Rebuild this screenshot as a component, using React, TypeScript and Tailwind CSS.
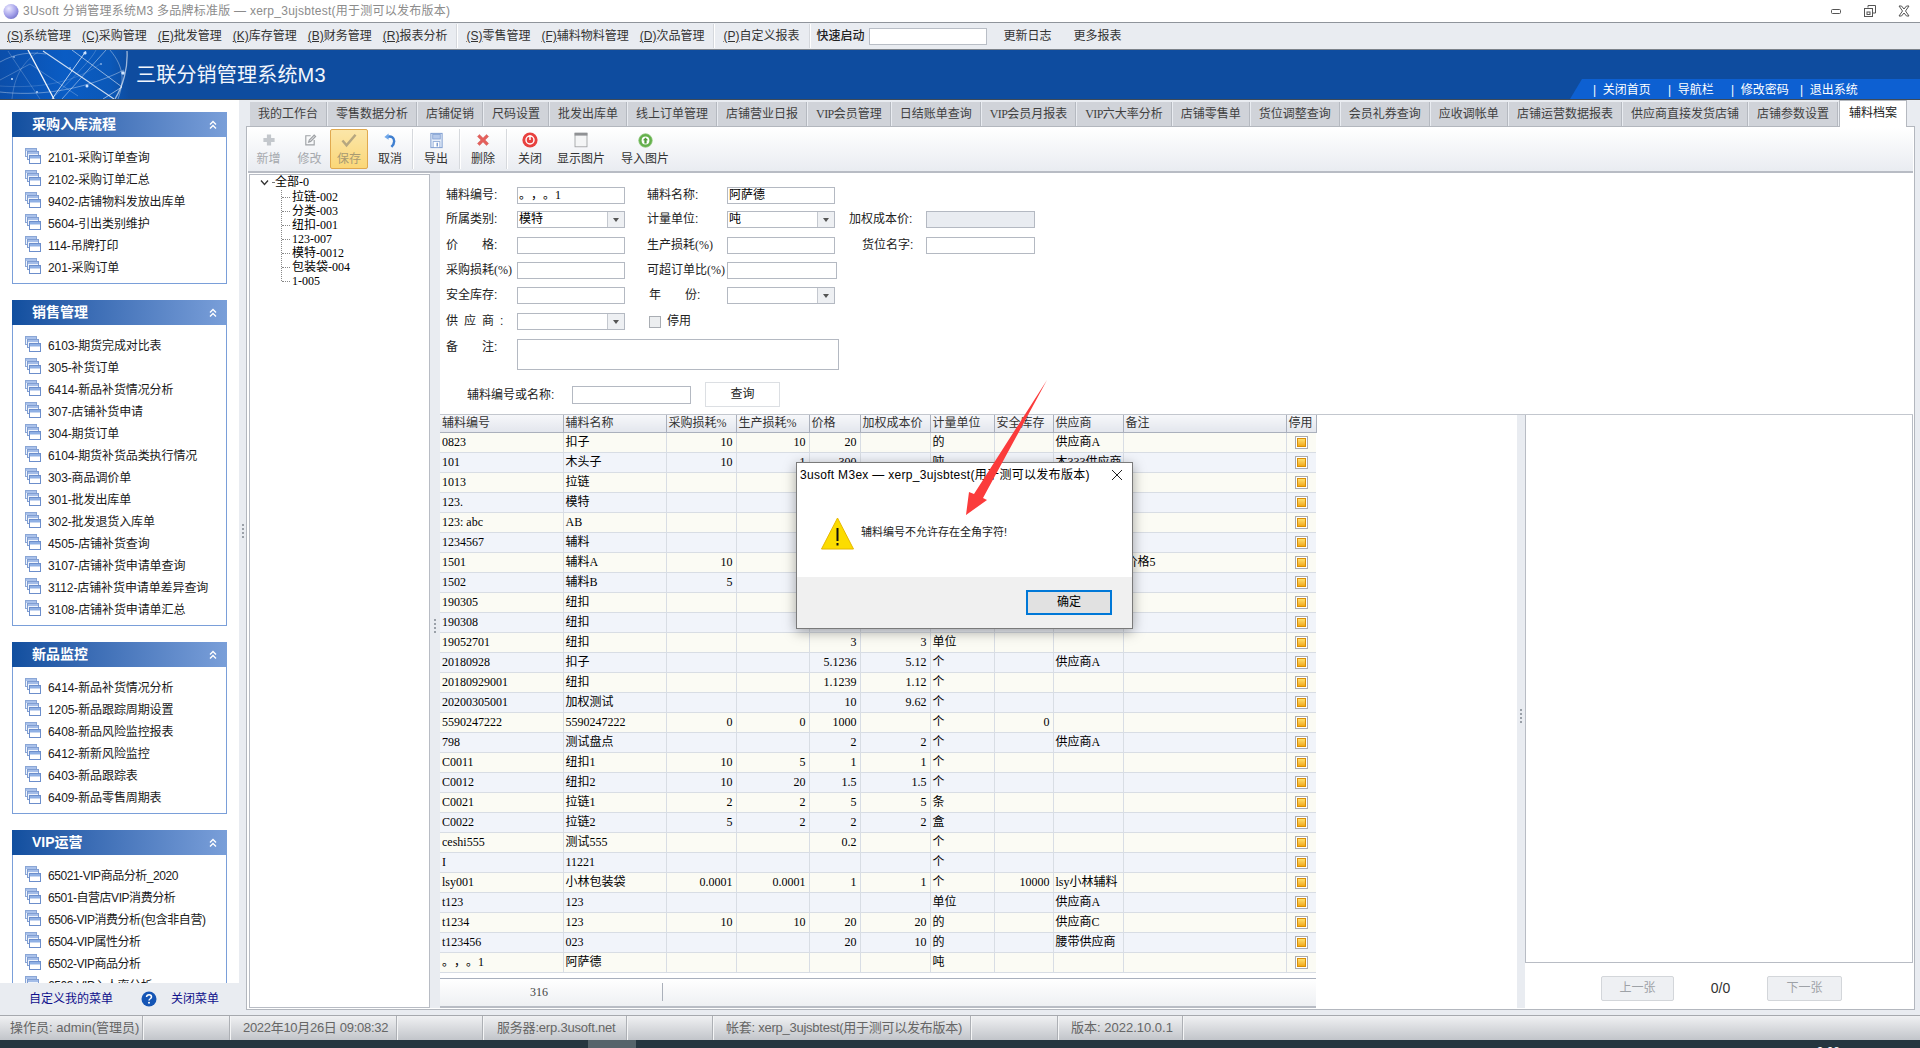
import type { ReactNode } from "react";

const MENUS_A = ["(S)|系统管理", "(C)|采购管理", "(E)|批发管理", "(K)|库存管理", "(B)|财务管理", "(R)|报表分析"];
const MENUS_B = ["(S)|零售管理", "(F)|辅料物料管理", "(D)|次品管理"];

const TABS = [
  "我的工作台", "零售数据分析", "店铺促销", "尺码设置", "批发出库单", "线上订单管理", "店铺营业日报",
  "VIP会员管理", "日结账单查询", "VIP会员月报表", "VIP六大率分析", "店铺零售单", "货位调整查询",
  "会员礼券查询", "应收调帐单", "店铺运营数据报表", "供应商直接发货店铺", "店铺参数设置",
];

const SIDE = [
  {
    title: "采购入库流程",
    items: ["2101-采购订单查询", "2102-采购订单汇总", "9402-店铺物料发放出库单", "5604-引出类别维护", "114-吊牌打印", "201-采购订单"],
  },
  {
    title: "销售管理",
    items: [
      "6103-期货完成对比表", "305-补货订单", "6414-新品补货情况分析", "307-店铺补货申请", "304-期货订单",
      "6104-期货补货品类执行情况", "303-商品调价单", "301-批发出库单", "302-批发退货入库单", "4505-店铺补货查询",
      "3107-店铺补货申请单查询", "3112-店铺补货申请单差异查询", "3108-店铺补货申请单汇总",
    ],
  },
  {
    title: "新品监控",
    items: ["6414-新品补货情况分析", "1205-新品跟踪周期设置", "6408-新品风险监控报表", "6412-新新风险监控", "6403-新品跟踪表", "6409-新品零售周期表"],
  },
  {
    title: "VIP运营",
    items: ["65021-VIP商品分析_2020", "6501-自营店VIP消费分析", "6506-VIP消费分析(包含非自营)", "6504-VIP属性分析", "6502-VIP商品分析", "6503-VIP入人率分析"],
  },
];

const TREE = ["拉链-002", "分类-003", "纽扣-001", "123-007", "模特-0012", "包装袋-004", "1-005"];

const COLS = [123, 103, 70, 73, 51, 70, 64, 59, 70, 163, 30];
const HEAD = ["辅料编号", "辅料名称", "采购损耗%", "生产损耗%", "价格", "加权成本价", "计量单位", "安全库存", "供应商", "备注", "停用"];
const RIGHT = [2, 3, 4, 5, 7];

const ROWS = [
  ["0823", "扣子", "10", "10", "20", "", "的", "", "供应商A", ""],
  ["101", "木头子", "10", "1", "300", "", "吨", "", "木333供应商", ""],
  ["1013", "拉链", "", "", "", "", "", "", "", ""],
  ["123.", "模特", "", "", "", "", "", "", "", ""],
  ["123: abc", "AB", "", "", "", "", "", "", "", ""],
  ["1234567", "辅料", "", "", "", "", "", "", "", ""],
  ["1501", "辅料A", "10", "", "", "", "", "", "", "价格5"],
  ["1502", "辅料B", "5", "", "", "", "", "", "", ""],
  ["190305", "纽扣", "", "", "", "", "", "", "", ""],
  ["190308", "纽扣", "", "", "", "", "", "", "", ""],
  ["19052701", "纽扣", "", "", "3", "3", "单位", "", "", ""],
  ["20180928", "扣子", "", "", "5.1236", "5.12", "个", "", "供应商A", ""],
  ["20180929001", "纽扣", "", "", "1.1239", "1.12", "个", "", "", ""],
  ["20200305001", "加权测试", "", "", "10", "9.62", "个", "", "", ""],
  ["5590247222", "5590247222", "0", "0", "1000", "", "个", "0", "", ""],
  ["798", "测试盘点", "", "", "2", "2", "个", "", "供应商A", ""],
  ["C0011", "纽扣1", "10", "5", "1", "1", "个", "", "", ""],
  ["C0012", "纽扣2", "10", "20", "1.5", "1.5", "个", "", "", ""],
  ["C0021", "拉链1", "2", "2", "5", "5", "条", "", "", ""],
  ["C0022", "拉链2", "5", "2", "2", "2", "盒", "", "", ""],
  ["ceshi555", "测试555", "", "", "0.2", "", "个", "", "", ""],
  ["I", "11221", "", "", "", "", "个", "", "", ""],
  ["lsy001", "小林包装袋", "0.0001", "0.0001", "1", "1", "个", "10000", "lsy小林辅料", ""],
  ["t123", "123", "", "", "", "", "单位", "", "供应商A", ""],
  ["t1234", "123", "10", "10", "20", "20", "的", "", "供应商C", ""],
  ["t123456", "023", "", "", "20", "10", "的", "", "腰带供应商", ""],
  ["。，。1", "阿萨德", "", "", "", "", "吨", "", "", ""],
];

// SimSun's half-width digits are 6px wide; Liberation Serif at 12px has the same digit width
function T({ s }: { s: string }) {
  return (
    <>
      {s.split(/([\x20-\x7e]+)/).map((p, i) =>
        i % 2 ? (
          <span key={i} className="font-['Liberation_Serif'] text-[12px]">
            {p}
          </span>
        ) : (
          p
        )
      )}
    </>
  );
}

function Dots() {
  return (
    <div className="flex flex-col gap-[2px]">
      <div className="w-[2px] h-[2px] bg-[#9aa0a8]" />
      <div className="w-[2px] h-[2px] bg-[#9aa0a8]" />
      <div className="w-[2px] h-[2px] bg-[#9aa0a8]" />
      <div className="w-[2px] h-[2px] bg-[#9aa0a8]" />
    </div>
  );
}

function MenuItem({ text }: { text: string }) {
  const [key, label] = text.split("|");
  return (
    <span className="text-[#333] whitespace-nowrap">
      <span className="underline">{key}</span>
      {label}
    </span>
  );
}

function MenuSep() {
  return <div className="w-[1px] h-[24px] bg-[#d5d8dd] shadow-[1px_0_0_#fff]" />;
}

function Network() {
  return (
    <svg width="130" height="49" viewBox="0 0 130 49" className="shrink-0" stroke="#fff" fill="none">
      <defs>
        <linearGradient id="netbg" x1="0" x2="1" y1="0" y2="0">
          <stop offset="0" stopColor="#0b4eaa" />
          <stop offset="0.5" stopColor="#0a5cc4" />
          <stop offset="0.85" stopColor="#0b58b8" />
          <stop offset="1" stopColor="#0e4c9f" />
        </linearGradient>
      </defs>
      <rect width="130" height="49" fill="url(#netbg)" stroke="none" />
      <path d="M28 0 L54 49" strokeWidth="1.3" opacity="0.95" />
      <path d="M43 1 L114 49" strokeWidth="1.1" opacity="0.8" />
      <path d="M86 1 L52 49" strokeWidth="1" opacity="0.7" />
      <path d="M72 0 L122 37 L103 49" strokeWidth="0.9" opacity="0.6" />
      <path d="M106 0 L62 49" strokeWidth="0.8" opacity="0.55" />
      <path d="M127 1 C128 18 123 36 115 49" strokeWidth="1.3" opacity="0.6" />
      <path d="M110 0 C125 18 124 32 118 49" strokeWidth="0.8" opacity="0.45" />
      <path d="M0 42 C35 46 80 42 124 20" strokeWidth="0.8" opacity="0.45" />
      <path d="M0 12 C16 3 30 2 46 4" strokeWidth="0.7" opacity="0.45" />
      <path d="M8 1 L40 49" strokeWidth="0.6" opacity="0.35" />
      <path d="M0 30 L30 14 L78 46" strokeWidth="0.6" opacity="0.4" />
      <path d="M12 49 C14 30 20 14 38 2" strokeWidth="0.6" opacity="0.35" />
      <path d="M0 36 C30 38 70 36 100 14" strokeWidth="0.5" opacity="0.3" />
      <path d="M52 49 C70 30 90 12 96 0" strokeWidth="0.6" opacity="0.35" />
      <g fill="#cfe4ff" stroke="none">
        <circle cx="85" cy="3" r="1.6" />
        <circle cx="123" cy="23" r="1.7" />
        <circle cx="87" cy="36" r="1.5" />
        <circle cx="12" cy="29" r="1" />
        <circle cx="37" cy="42" r="0.9" />
        <circle cx="14" cy="7" r="0.8" />
        <circle cx="70" cy="18" r="0.8" />
        <circle cx="101" cy="14" r="0.8" />
      </g>
    </svg>
  );
}

function WinBtn({ kind }: { kind: "min" | "max" | "close" }) {
  return (
    <svg width="14" height="14" viewBox="0 0 14 14" fill="none" stroke="#555" strokeWidth="1">
      {kind === "min" && <rect x="2.5" y="5.5" width="9" height="4" rx="1" />}
      {kind === "max" && (
        <>
          <path d="M5 3.5V1.5H12.5V9H10" />
          <rect x="1.5" y="4.5" width="8" height="8" />
          <rect x="4" y="8" width="3" height="2.5" />
        </>
      )}
      {kind === "close" && <path d="M2 2h2.5L7 5l2.5-3H12L8.5 7 12 12H9.5L7 9l-2.5 3H2l3.5-5z" />}
    </svg>
  );
}

function ListIcon() {
  return (
    <svg width="16" height="16" viewBox="0 0 16 16" className="shrink-0 -mt-[2px]">
      <rect x="0.5" y="0.5" width="11" height="8" fill="#eef3fb" stroke="#8aa6d6" />
      <rect x="1" y="1" width="10" height="2" fill="#a9c1ea" />
      <rect x="2.5" y="3.5" width="11" height="8" fill="#eef3fb" stroke="#7f9dd2" />
      <rect x="3" y="4" width="10" height="2" fill="#a4bde8" />
      <rect x="4.5" y="7.5" width="11" height="8" fill="#fff" stroke="#6c8ecb" />
      <rect x="5" y="8" width="10" height="2.5" fill="#8fb0e4" />
    </svg>
  );
}

function Panel({ title, items }: { title: string; items: string[] }) {
  return (
    <div className="mb-[16px] w-[215px]">
      <div className="h-[25px] flex items-center justify-between pl-[20px] pr-[9px] bg-gradient-to-r from-[#114f9f] to-[#7a9fd9]">
        <span className="text-[14px] font-bold text-white leading-[25px]">{title}</span>
        <svg width="10" height="10" viewBox="0 0 10 10" fill="none" stroke="#fff" strokeWidth="1.4">
          <path d="M2 4.5 5 1.5 8 4.5M2 8.5 5 5.5 8 8.5" />
        </svg>
      </div>
      <div className="border border-t-0 border-[#7a9fd9] bg-white pt-[9px] pb-[5px] pl-[12px]">
        {items.map((it) => (
          <div key={it} className="h-[22px] flex items-center gap-[7px] whitespace-nowrap text-[#1a1a1a]">
            <ListIcon />
            <span className={`mt-[1px] ${it.includes("VIP") ? "tracking-[-0.45px]" : "tracking-[-0.1px]"}`}>{it}</span>
          </div>
        ))}
      </div>
    </div>
  );
}

function ToolIcon({ name }: { name: string }) {
  if (name === "add")
    return (
      <svg width="14" height="14" viewBox="0 0 20 20">
        <path d="M7 2h6v5h5v6h-5v5H7v-5H2V7h5z" fill="#c3c7cc" />
      </svg>
    );
  if (name === "edit")
    return (
      <svg width="14" height="14" viewBox="0 0 20 20" fill="none" stroke="#9ea1a5" strokeWidth="1.6">
        <path d="M11 4H4v13h12v-7" />
        <path d="M8 13l1-3 7-7 2 2-7 7z" fill="#e6e7e9" />
      </svg>
    );
  if (name === "save")
    return (
      <svg width="18" height="17" viewBox="0 0 22 20" fill="none">
        <path d="M3 10l5 6L19 3" stroke="#b6a780" strokeWidth="3" />
      </svg>
    );
  if (name === "undo")
    return (
      <svg width="14" height="17" viewBox="0 0 20 22" fill="none">
        <path d="M6 6c6-2 10 1 10 6 0 3-2 6-4 8" stroke="#3f7fd0" strokeWidth="3.500" />
        <path d="M2 6l6-5v9z" fill="#6fa7ea" />
      </svg>
    );
  if (name === "export")
    return (
      <svg width="15" height="17" viewBox="0 0 20 22">
        <rect x="2.5" y="1.5" width="15" height="19" fill="#e8effa" stroke="#7e9dd0" strokeWidth="1.300" />
        <rect x="5" y="3" width="10" height="6" fill="#b5c9ea" stroke="#7e9dd0" />
        <rect x="5.5" y="12.5" width="9" height="8" fill="#fff" stroke="#7e9dd0" />
        <rect x="10" y="14" width="2" height="5" fill="#7e9dd0" />
      </svg>
    );
  if (name === "del")
    return (
      <svg width="14" height="14" viewBox="0 0 20 20">
        <path d="M2 5l3-3 5 5 5-5 3 3-5 5 5 5-3 3-5-5-5 5-3-3 5-5z" fill="#e4605c" stroke="#c94b48" strokeWidth="0.5" />
      </svg>
    );
  if (name === "close")
    return (
      <svg width="16" height="16" viewBox="0 0 20 20" fill="none">
        <circle cx="10" cy="10" r="9.500" fill="#e8413f" />
        <circle cx="10" cy="10" r="5" stroke="#fff" strokeWidth="1.8" />
        <path d="M10 4v6" stroke="#fff" strokeWidth="1.8" />
      </svg>
    );
  if (name === "pic")
    return (
      <svg width="16" height="16" viewBox="0 0 20 20">
        <rect x="2.5" y="1.5" width="15" height="17" fill="#f4f5f6" stroke="#9a9c9f" />
        <rect x="2" y="1" width="16" height="3.500" fill="#8f9194" />
      </svg>
    );
  return (
    <svg width="15" height="15" viewBox="0 0 20 20">
      <circle cx="10" cy="10" r="9" fill="#64b04c" stroke="#8cc878" />
      <circle cx="10" cy="10" r="5.200" fill="#fff" />
      <path d="M10 6l3.500 3.500h-2V14h-3V9.500h-2z" fill="#4f9a3a" />
    </svg>
  );
}

const TOOLS = [
  { icon: "add", label: "新增", box: "w-[41px] text-[#a6a9ad]" },
  { icon: "edit", label: "修改", box: "w-[41px] text-[#a6a9ad]" },
  {
    icon: "save",
    label: "保存",
    box: "w-[38px] text-[#a89a72] bg-gradient-to-b from-[#fbe6a8] to-[#fbd778] border border-[#e0a94f] rounded-[2px]",
  },
  { icon: "undo", label: "取消", box: "w-[40px] ml-[2px] text-[#333]" },
  { sep: true },
  { icon: "export", label: "导出", box: "w-[42px] text-[#333]" },
  { sep: true },
  { icon: "del", label: "删除", box: "w-[42px] text-[#333]" },
  { sep: true },
  { icon: "close", label: "关闭", box: "w-[42px] text-[#333]" },
  { icon: "pic", label: "显示图片", box: "w-[60px] text-[#333]" },
  { icon: "up", label: "导入图片", box: "w-[68px] text-[#333]" },
];

function Label({ children, className = "w-[71px]" }: { children: ReactNode; className?: string }) {
  return <label className={`shrink-0 whitespace-pre text-[#222] ${className}`}>{children}</label>;
}

function Input({ value = "", className = "w-[108px]" }: { value?: string; className?: string }) {
  return (
    <div className={`h-[17px] shrink-0 border border-[#b4b9c2] pl-[1px] leading-[14px] text-black whitespace-nowrap ${className}`}>
      <T s={value} />
    </div>
  );
}

function Select({ value = "" }: { value?: string }) {
  return (
    <div className="h-[17px] w-[108px] shrink-0 border border-[#b4b9c2] flex">
      <div className="flex-1 pl-[1px] leading-[14px] text-black">{value}</div>
      <div className="w-[17px] border-l border-[#c4c8cf] bg-[#eef0f3] flex items-center justify-center">
        <div className="w-0 h-0 border-x-[3.5px] border-x-transparent border-t-[4px] border-t-[#555]" />
      </div>
    </div>
  );
}

function FormRow({ children, className }: { children: ReactNode; className: string }) {
  return <div className={`flex items-center leading-[17px] pl-[6px] ${className}`}>{children}</div>;
}

function StopMark() {
  return (
    <div className="w-[13px] h-[13px] mx-auto border border-[#a9abb0] bg-white p-[1px]">
      <div className="w-full h-full border border-[#d98f08] bg-gradient-to-b from-[#fde06a] to-[#f2aa10]" />
    </div>
  );
}

function StatusCell({ children, className }: { children?: ReactNode; className: string }) {
  return (
    <div className={`h-full shrink-0 border-r border-r-[#adb0b5] shadow-[1px_0_0_#f4f5f6] flex items-center whitespace-nowrap ${className}`}>
      {children}
    </div>
  );
}

export default function App() {
  return (
    <div className="relative w-[1920px] h-[1048px] overflow-hidden flex flex-col bg-white text-[12px] [text-spacing-trim:space-all] font-['Liberation_Sans','Noto_Sans_CJK_SC',sans-serif]">
      {/* title bar */}
      <div className="h-[23px] shrink-0 flex items-center bg-white border-b border-[#8f949b] pl-[3px] pr-[9px]">
        <svg width="16" height="17" viewBox="0 0 16 17" className="shrink-0">
          <defs>
            <radialGradient id="orb" cx="0.35" cy="0.3" r="0.8">
              <stop offset="0" stopColor="#eceaff" />
              <stop offset="0.6" stopColor="#a5a2ea" />
              <stop offset="1" stopColor="#6f6fc8" />
            </radialGradient>
          </defs>
          <circle cx="8" cy="8.500" r="7.500" fill="url(#orb)" />
        </svg>
        <span className="ml-[4px] text-[12px] tracking-[0.25px] text-[#8c8c8c] whitespace-nowrap">
          3Usoft 分销管理系统M3 多品牌标准版 — xerp_3ujsbtest(用于测可以发布版本)
        </span>
        <div className="ml-auto flex items-center gap-[20px]">
          <WinBtn kind="min" />
          <WinBtn kind="max" />
          <WinBtn kind="close" />
        </div>
      </div>

      {/* menu bar */}
      <div className="h-[27px] shrink-0 flex items-center gap-[9px] pl-[7px] bg-[#e9ecf1] border-b border-[#7d838b]">
        <div className="flex gap-[11px]">
          {MENUS_A.map((m) => (
            <MenuItem key={m} text={m} />
          ))}
        </div>
        <MenuSep />
        <div className="flex gap-[11px]">
          {MENUS_B.map((m) => (
            <MenuItem key={m} text={m} />
          ))}
        </div>
        <MenuSep />
        <MenuItem text="(P)|自定义报表" />
        <MenuSep />
        <span className="-ml-[2px] text-[#222] font-medium">快速启动</span>
        <div className="-ml-[5px] w-[118px] h-[17px] bg-white border border-[#b9bec6]" />
        <span className="ml-[8px] text-[#333]">更新日志</span>
        <span className="ml-[13px] text-[#333]">更多报表</span>
      </div>

      {/* banner */}
      <div className="h-[50px] shrink-0 flex bg-[#0e4c9f] border-b border-[#3e4a58]">
        <Network />
        <div className="ml-[6px] text-[20px] tracking-[0.2px] leading-[50px] text-[#f2f6fc] whitespace-nowrap">三联分销管理系统M3</div>
        <div className="ml-auto self-end h-[20px] w-[350px] flex items-center text-white pl-[23px] pt-[1px] bg-[#0d60d2] [clip-path:polygon(12px_0,100%_0,100%_100%,0_100%)]">
          <span className="w-[75px]">|&nbsp; 关闭首页</span>
          <span className="w-[63px]">|&nbsp; 导航栏</span>
          <span className="w-[69px]">|&nbsp; 修改密码</span>
          <span>|&nbsp; 退出系统</span>
        </div>
      </div>

      {/* main */}
      <div className="flex-1 min-h-0 flex">
        <aside className="w-[239px] shrink-0 flex flex-col bg-white">
          <div className="flex-1 min-h-0 overflow-hidden pl-[12px] pt-[12px]">
            {SIDE.map((p) => (
              <Panel key={p.title} title={p.title} items={p.items} />
            ))}
          </div>
          <div className="h-[32px] shrink-0 flex items-center bg-[#e9ecf1] pl-[29px] text-[#10108c] whitespace-nowrap">
            <span>自定义我的菜单</span>
            <svg width="16" height="16" viewBox="0 0 16 16" className="ml-[28px]">
              <circle cx="8" cy="8" r="7.500" fill="#1555b5" />
              <path d="M5.500 6c.3-3 5-3 5 0 0 1.700-2.500 1.800-2.500 3.500" fill="none" stroke="#fff" strokeWidth="1.500" />
              <circle cx="8" cy="11.800" r="1" fill="#fff" />
            </svg>
            <span className="ml-[14px]">关闭菜单</span>
          </div>
        </aside>

        <div className="w-[7px] shrink-0 bg-[#e9ecf1] flex items-center justify-center pb-[54px]">
          <Dots />
        </div>

        <div className="flex-1 min-w-0 flex flex-col bg-[#e9ecf1] pr-[5px] pb-[5px]">
          {/* tabs */}
          <div className="h-[26px] shrink-0 flex items-end pl-[4px] gap-[1px] whitespace-nowrap">
            {TABS.map((t) => (
              <div key={t} className="h-[24px] px-[8px] border-r border-[#b5b9c0] bg-[#d0d3d9] text-[#3f3f3f] leading-[25px] shrink-0 [&_span]:tracking-[-0.6px]">
                <T s={t} />
              </div>
            ))}
            <div className="h-[27px] -mb-[1px] relative px-[9px] bg-white border-x border-t border-[#b5b9c0] text-[#222] leading-[24px] shrink-0">
              辅料档案
            </div>
          </div>

          {/* content box */}
          <div className="flex-1 min-h-0 flex flex-col bg-white border border-[#b3b7be] p-[1px]">
            {/* toolbar */}
            <div className="h-[45px] shrink-0 flex items-start pt-[1px] border-b-2 border-[#b8bcc4] bg-gradient-to-b from-white to-[#e9ecf1]">
              {TOOLS.map((t, i) =>
                t.sep ? (
                  <div key={i} className="w-[1px] h-[40px] mx-[2px] bg-[#d6d9dd] shadow-[1px_0_0_#fff]" />
                ) : (
                  <div key={t.label} className={`h-[40px] flex flex-col items-center whitespace-nowrap shrink-0 ${t.box}`}>
                    <div className="h-[22px] flex items-center">
                      <ToolIcon name={t.icon as string} />
                    </div>
                    <span className="leading-[17px]">{t.label}</span>
                  </div>
                )
              )}
            </div>

            <div className="flex-1 min-h-0 flex">
              {/* tree */}
              <div className="w-[181px] ml-[1px] mt-[1px] shrink-0 border border-[#b8bcc4] pl-[10px] text-black relative">
                <div className="flex items-center h-[14px] leading-[14px]">
                  <svg width="9" height="9" viewBox="0 0 9 9" fill="none" stroke="#333" strokeWidth="1.300">
                    <path d="M1 2.500 4.500 6.500 8 2.500" />
                  </svg>
                  <span className="ml-[3px] w-[2px] border-t border-dotted border-[#777]" />
                  <span className="ml-[1px]">
                    <T s="全部-0" />
                  </span>
                </div>
                <div className="ml-[21px] mt-[1px] border-l border-dotted border-[#888] h-[91px]">
                  {TREE.map((n) => (
                    <div key={n} className="flex items-center h-[14px] leading-[14px] whitespace-nowrap">
                      <span className="w-[8px] mr-[2px] border-t border-dotted border-[#888]" />
                      <span>
                        <T s={n} />
                      </span>
                    </div>
                  ))}
                </div>
              </div>

              <div className="w-[10px] shrink-0 bg-[#e9ecf1] flex items-center justify-center pt-[70px]">
                <Dots />
              </div>

              {/* form and list */}
              <div className="flex-1 min-w-0 flex flex-col">
                <div className="h-[241px] shrink-0 pt-[14px]">
                  <FormRow className="">
                    <Label>辅料编号:</Label>
                    <Input value="。，。1" />
                    <Label className="w-[80px] ml-[22px]">辅料名称:</Label>
                    <Input value="阿萨德" />
                  </FormRow>
                  <FormRow className="mt-[7px]">
                    <Label>所属类别:</Label>
                    <Select value="模特" />
                    <Label className="w-[80px] ml-[22px]">计量单位:</Label>
                    <Select value="吨" />
                    <Label className="w-[77px] ml-[14px]">加权成本价:</Label>
                    <Input className="w-[109px] bg-[#e9ecf1]" />
                  </FormRow>
                  <FormRow className="mt-[9px]">
                    <Label>价　　格:</Label>
                    <Input />
                    <Label className="w-[80px] ml-[22px]">
                      生产损耗
                      <T s="(%)" />
                    </Label>
                    <Input />
                    <Label className="w-[64px] ml-[27px]">货位名字:</Label>
                    <Input className="w-[109px]" />
                  </FormRow>
                  <FormRow className="mt-[8px]">
                    <Label>
                      采购损耗
                      <T s="(%)" />
                    </Label>
                    <Input />
                    <Label className="w-[80px] ml-[22px]">
                      可超订单比
                      <T s="(%)" />
                    </Label>
                    <Input className="w-[110px]" />
                  </FormRow>
                  <FormRow className="mt-[8px]">
                    <Label>安全库存:</Label>
                    <Input />
                    <Label className="w-[78px] ml-[24px]">年　　份:</Label>
                    <Select />
                  </FormRow>
                  <FormRow className="mt-[9px]">
                    <Label>
                      <span className="tracking-[6px]">供应商</span>:
                    </Label>
                    <Select />
                    <div className="ml-[24px] w-[12px] h-[12px] border border-[#a9adb3] bg-[#eceef0]" />
                    <span className="ml-[6px] text-[#222]">停用</span>
                  </FormRow>
                  <div className="flex pl-[6px] mt-[9px] leading-[17px]">
                    <Label>备　　注:</Label>
                    <div className="w-[322px] h-[31px] border border-[#b4b9c2]" />
                  </div>
                  <div className="flex items-center pl-[27px] mt-[12px]">
                    <Label className="w-[105px] text-[#222]">辅料编号或名称:</Label>
                    <div className="w-[119px] h-[18px] border border-[#b4b9c2]" />
                    <div className="ml-[14px] w-[75px] h-[25px] border border-[#dcdfe3] text-center leading-[23px] text-[#222]">查询</div>
                  </div>
                </div>

                <div className="flex-1 min-h-0 flex border-t border-[#c3c7ce]">
                  <div className="flex-1 min-w-0 flex flex-col">
                    <table className="table-fixed border-collapse w-[876px] text-black">
                      <colgroup>
                        {COLS.map((w, i) => (
                          <col key={i} width={w} />
                        ))}
                      </colgroup>
                      <thead>
                        <tr>
                          {HEAD.map((h) => (
                            <th
                              key={h}
                              className="h-[17px] p-0 pl-[2px] text-left font-normal leading-[16px] text-[#333] border-r border-b border-[#aab0bc] bg-gradient-to-b from-[#f6f7fa] to-[#e3e6ed] overflow-hidden whitespace-nowrap"
                            >
                              <T s={h} />
                            </th>
                          ))}
                        </tr>
                      </thead>
                      <tbody>
                        {ROWS.map((r, i) => (
                          <tr key={i} className={i % 2 ? "bg-[#f1f4fa]" : "bg-[#fbfbf4]"}>
                            {r.map((c, j) => (
                              <td
                                key={j}
                                className={`h-[20px] p-0 align-top border-r border-b border-[#d8dde4] leading-[18px] overflow-hidden whitespace-nowrap ${
                                  RIGHT.includes(j) ? "text-right pr-[3px]" : "pl-[2px]"
                                }`}
                              >
                                <T s={c} />
                              </td>
                            ))}
                            <td className="h-[20px] p-0 border-b border-[#d8dde4]">
                              <StopMark />
                            </td>
                          </tr>
                        ))}
                      </tbody>
                    </table>
                    <div className="mt-[5px] w-[876px] h-[31px] flex items-center border-t border-[#a9b0bd] border-b-2 border-b-[#b8bcc4] bg-gradient-to-b from-white to-[#eef0f3] text-[#444]">
                      <div className="w-[223px] h-[18px] border-r border-[#aab0ba] text-center leading-[18px] pr-[24px]">
                        <T s="316" />
                      </div>
                    </div>
                  </div>

                  <div className="w-[8px] shrink-0 bg-[#e9ecf1] flex items-center justify-center pt-[8px]">
                    <Dots />
                  </div>

                  <div className="w-[388px] shrink-0 flex flex-col">
                    <div className="flex-1 min-h-0 border border-t-0 border-[#b8bcc4]" />
                    <div className="h-[45px] shrink-0 flex items-start pt-[13px] pl-[76px] text-[#9ea2a7]">
                      <div className="w-[73px] h-[25px] border border-[#d3d6da] rounded-[2px] bg-[#eef0f3] text-center leading-[23px]">上一张</div>
                      <div className="w-[93px] h-[25px] text-center leading-[25px] text-[14px] text-[#333]">0/0</div>
                      <div className="w-[75px] h-[25px] border border-[#d3d6da] rounded-[2px] bg-[#eef0f3] text-center leading-[23px]">下一张</div>
                    </div>
                  </div>
                </div>
              </div>
            </div>
          </div>
        </div>
      </div>

      {/* status bar */}
      <div className="h-[25px] shrink-0 flex border-t border-[#a6a9ae] bg-gradient-to-b from-[#f0f1f3] to-[#c2c5ca] text-[13px] text-[#666]">
        <StatusCell className="w-[143px] pl-[10px]">操作员: admin(管理员)</StatusCell>
        <StatusCell className="w-[87px]" />
        <StatusCell className="w-[167px] pl-[13px] tracking-[-0.3px]">2022年10月26日 09:08:32</StatusCell>
        <StatusCell className="w-[86px]" />
        <StatusCell className="w-[144px] pl-[14px] tracking-[-0.2px]">服务器:erp.3usoft.net</StatusCell>
        <StatusCell className="w-[86px]" />
        <StatusCell className="w-[258px] pl-[13px] tracking-[-0.25px]">帐套: xerp_3ujsbtest(用于测可以发布版本)</StatusCell>
        <StatusCell className="w-[87px]" />
        <StatusCell className="w-[125px] pl-[13px]">版本: 2022.10.0.1</StatusCell>
      </div>

      {/* taskbar, cut off by the window edge */}
      <div className="h-[8px] shrink-0 flex bg-[#263640] overflow-hidden">
        <div className="ml-[588px] w-[48px] bg-[#56646b]" />
        <div className="ml-auto mr-[80px] pt-[5px] text-[12px] leading-[14px] text-white">9:08</div>
      </div>

      {/* message dialog */}
      <div className="absolute left-[796px] top-[462px] w-[337px] h-[167px] flex flex-col bg-white border border-[#7a7a7a] shadow-[0_3px_12px_rgba(0,0,0,0.35)]">
        <div className="h-[24px] shrink-0 flex items-center pl-[3px] pr-[9px] text-[12px] text-black whitespace-nowrap">
          <span className="tracking-[0.3px]">3usoft M3ex — xerp_3ujsbtest(用于测可以发布版本)</span>
          <svg width="12" height="12" viewBox="0 0 12 12" className="ml-auto" fill="none" stroke="#222" strokeWidth="1">
            <path d="M1 1l10 10M11 1 1 11" />
          </svg>
        </div>
        <div className="flex-1 flex items-start pl-[24px] pt-[30px]">
          <svg width="33" height="33" viewBox="0 0 33 33" className="shrink-0">
            <path d="M16.500 1 32.500 32H.5z" fill="#fcdc00" stroke="#e6b800" />
            <rect x="15.500" y="11" width="2" height="13" fill="#111" />
            <rect x="15.500" y="26" width="2" height="2.500" fill="#111" />
          </svg>
          <span className="ml-[7px] mt-[7px] text-[11px] text-[#222] whitespace-nowrap">辅料编号不允许存在全角字符!</span>
        </div>
        <div className="h-[51px] shrink-0 flex items-start justify-end bg-[#f0f0f0] pt-[13px] pr-[20px]">
          <div className="w-[86px] h-[25px] border-2 border-[#0078d7] bg-[#e1e1e1] text-center leading-[21px] text-[12px] text-black">确定</div>
        </div>
      </div>

      {/* red annotation arrow */}
      <svg className="absolute left-0 top-0 pointer-events-none" width="1920" height="1048" viewBox="0 0 1920 1048">
        <polygon points="1047,380 983,498 987,500 966,515 969,492 974,494" fill="#fb3b3b" />
      </svg>
    </div>
  );
}
